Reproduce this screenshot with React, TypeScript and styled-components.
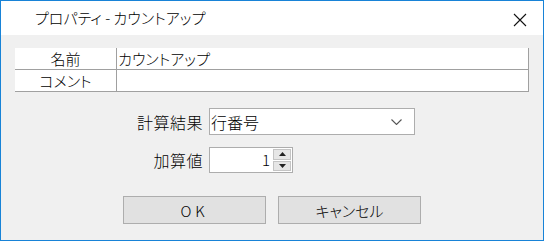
import * as React from "react"
import styled, { createGlobalStyle } from "styled-components"

const GlobalStyle = createGlobalStyle`
  html, body {
    margin: 0;
    padding: 0;
    background: #ffffff;
  }
  body {
    font-family: "Noto Sans CJK JP", "Noto Sans", sans-serif;
  }
`

type Field = { name: string; value: string }

const fields: Field[] = [
  { name: "名前", value: "カウントアップ" },
  { name: "コメント", value: "" },
]

export default function App() {
  return (
    <>
      <GlobalStyle />
      <Window>
        <TitleBar>
          <Title>プロパティ - カウントアップ</Title>
          <CloseButton aria-label="閉じる">
            <svg width="14" height="14" viewBox="0 0 14 14">
              <path d="M1 1 L13 13 M13 1 L1 13" stroke="#111" strokeWidth="1.1" />
            </svg>
          </CloseButton>
        </TitleBar>
        <Body>
          <PropertyGrid>
            {fields.map(({ name, value }) => (
              <React.Fragment key={name}>
                <NameCell>{name}</NameCell>
                <ValueCell>{value}</ValueCell>
              </React.Fragment>
            ))}
          </PropertyGrid>

          <Form>
            <Label>計算結果</Label>
            <Combo>
              <ComboText>行番号</ComboText>
              <svg width="11" height="6" viewBox="0 0 11 6">
                <path d="M0.5 0.5 L5.5 5.5 L10.5 0.5" fill="none" stroke="#555" strokeWidth="1.1" />
              </svg>
            </Combo>

            <Label>加算値</Label>
            <Spinner>
              <SpinValue>1</SpinValue>
              <SpinButtons>
                <SpinButton>
                  <svg width="7" height="4" viewBox="0 0 7 4">
                    <path d="M0 4 L3.5 0 L7 4 Z" fill="#222" />
                  </svg>
                </SpinButton>
                <SpinButton>
                  <svg width="7" height="4" viewBox="0 0 7 4">
                    <path d="M0 0 L3.5 4 L7 0 Z" fill="#222" />
                  </svg>
                </SpinButton>
              </SpinButtons>
            </Spinner>
          </Form>

          <ButtonRow>
            <DialogButton $spacing={4}>OK</DialogButton>
            <DialogButton>キャンセル</DialogButton>
          </ButtonRow>
        </Body>
      </Window>
    </>
  )
}

const Window = styled.div`
  width: 544px;
  height: 241px;
  box-sizing: border-box;
  border: 1px solid #1883d7;
  display: flex;
  flex-direction: column;
  overflow: hidden;
`

const TitleBar = styled.div`
  height: 34px;
  flex: none;
  background: #ffffff;
  display: flex;
  align-items: center;
  justify-content: space-between;
  padding-left: 34px;
`

const Title = styled.div`
  font-size: 15px;
  font-weight: 300;
  font-feature-settings: "palt";
  color: #000;
  margin-top: -2px;
`

const CloseButton = styled.div`
  width: 46px;
  height: 34px;
  display: flex;
  align-items: center;
  justify-content: center;
  margin-top: 4px;
`

const Body = styled.div`
  flex: 1;
  background: #f0f0f0;
  padding: 13px 14px 0 14px;
  display: flex;
  flex-direction: column;
`

const PropertyGrid = styled.div`
  display: grid;
  grid-template-columns: 102px 1fr;
  width: 514px;
`

const Cell = styled.div`
  height: 21px;
  background: #ffffff;
  border-right: 1px solid #a0a0a0;
  border-bottom: 1px solid #a0a0a0;
  font-size: 15px;
  font-weight: 300;
  line-height: 21px;
  color: #000;
  white-space: nowrap;
  overflow: hidden;
  font-feature-settings: "palt";
`

const NameCell = styled(Cell)`
  text-align: center;
`

const ValueCell = styled(Cell)`
  padding-left: 1px;
`

const Form = styled.div`
  display: grid;
  grid-template-columns: 188px auto;
  column-gap: 6px;
  row-gap: 12px;
  align-items: center;
  justify-items: start;
  margin-top: 16px;
`

const Label = styled.div`
  justify-self: end;
  font-size: 16px;
  font-weight: 300;
  letter-spacing: 0.5px;
  color: #000;
`

const Combo = styled.div`
  width: 206px;
  height: 27px;
  box-sizing: border-box;
  background: #ffffff;
  border: 1px solid #adadad;
  display: flex;
  align-items: center;
  justify-content: space-between;
  padding: 0 12px 0 1px;
`

const ComboText = styled.span`
  font-size: 16px;
  font-weight: 300;
  color: #000;
`

const Spinner = styled.div`
  width: 84px;
  height: 26px;
  box-sizing: border-box;
  background: #ffffff;
  border: 1px solid #adadad;
  display: flex;
  align-items: stretch;
`

const SpinValue = styled.div`
  flex: 1;
  text-align: right;
  font-size: 15px;
  font-weight: 300;
  line-height: 24px;
  padding-right: 3px;
  color: #000;
`

const SpinButtons = styled.div`
  width: 18px;
  display: flex;
  flex-direction: column;
  gap: 1px;
  padding: 1px 1px 1px 0;
`

const SpinButton = styled.div`
  flex: 1;
  background: #e6e6e6;
  border: 1px solid #c4c4c4;
  display: flex;
  align-items: center;
  justify-content: center;
`

const ButtonRow = styled.div`
  display: flex;
  gap: 12px;
  margin-top: 23px;
  padding-left: 108px;
`

const DialogButton = styled.div<{ $spacing?: number }>`
  width: 143px;
  height: 28px;
  box-sizing: border-box;
  background: #e1e1e1;
  border: 1px solid #adadad;
  display: flex;
  align-items: center;
  justify-content: center;
  font-size: 15px;
  font-weight: 300;
  font-feature-settings: "palt";
  letter-spacing: ${(p) => p.$spacing ?? 0}px;
  color: #000;
`
